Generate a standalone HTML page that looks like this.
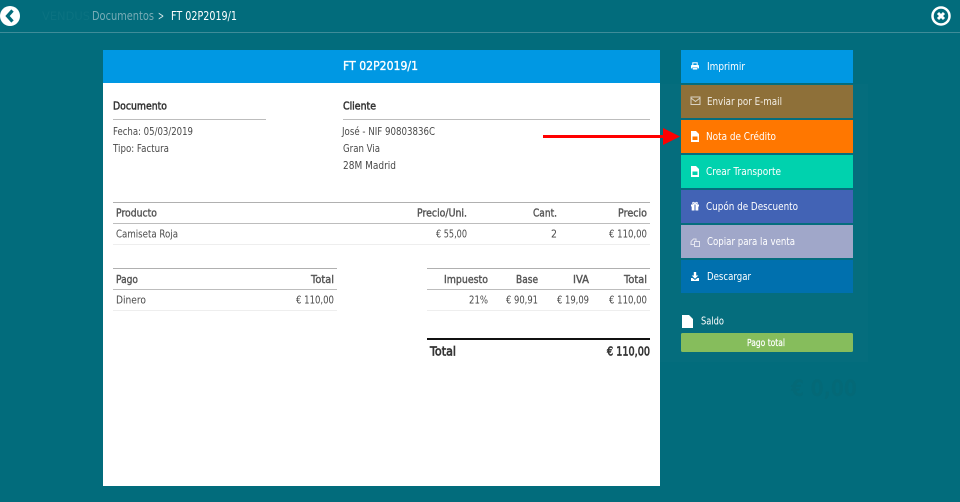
<!DOCTYPE html>
<html lang="es">
<head>
<meta charset="utf-8">
<title>FT 02P2019/1</title>
<style>
html,body{margin:0;padding:0;width:960px;height:502px;overflow:hidden;background:#026c7c}
svg{display:block;position:absolute;left:0;top:0;filter:blur(.3px)}
text{font-family:"DejaVu Sans","Liberation Sans",sans-serif;font-size:10.800px}
.d{fill:#4a4a4a}
.b{fill:#333;stroke:#333;stroke-width:.5px}
.h{fill:#555;stroke:#555;stroke-width:.4px}
.w{fill:#fff}
</style>
</head>
<body>
<svg width="960" height="502" viewBox="0 0 960 502" xmlns="http://www.w3.org/2000/svg">
<rect width="960" height="502" fill="#026c7c"/>
<rect x="660" y="84" width="208" height="278" fill="#056d7d"/>

<!-- top bar -->
<rect x="0" y="32" width="960" height="1" fill="#3f8c99"/>
<text x="42" y="20" textLength="48" lengthAdjust="spacingAndGlyphs" style="font-size:11.500px" fill="#0b7281">VENDUS</text>
<circle cx="10" cy="16" r="10" fill="#fff"/>
<path d="M12.500 10.500L7.500 16L12.500 21.500" fill="none" stroke="#026c7c" stroke-width="3.200"/>
<text x="92" y="20" textLength="62" lengthAdjust="spacingAndGlyphs" style="font-size:12px" fill="#78acb6">Documentos</text>
<text x="158" y="20" textLength="6" lengthAdjust="spacingAndGlyphs" style="font-size:12px" fill="#d5e5e8">&gt;</text>
<text x="171" y="20" textLength="66" lengthAdjust="spacingAndGlyphs" style="font-size:12px" class="w">FT 02P2019/1</text>
<circle cx="941" cy="16" r="8.500" fill="none" stroke="#fff" stroke-width="2.500"/>
<path d="M938 13L944 19M944 13L938 19" stroke="#fff" stroke-width="3"/>

<!-- card -->
<rect x="103" y="50" width="557" height="436" fill="#fff"/>
<rect x="103" y="50" width="557" height="33" fill="#0098e3"/>
<text x="343" y="70" textLength="75" lengthAdjust="spacingAndGlyphs" style="font-size:12.500px;stroke:#fff;stroke-width:.35px" class="w">FT 02P2019/1</text>

<text x="113" y="109.500" textLength="54" lengthAdjust="spacingAndGlyphs" class="b">Documento</text>
<rect x="113" y="119" width="153" height="1" fill="#bdbdbd"/>
<text x="113" y="135" textLength="80" lengthAdjust="spacingAndGlyphs" class="d">Fecha: 05/03/2019</text>
<text x="113" y="152" textLength="56" lengthAdjust="spacingAndGlyphs" class="d">Tipo: Factura</text>

<text x="343" y="109.500" textLength="33" lengthAdjust="spacingAndGlyphs" class="b">Cliente</text>
<rect x="343" y="119" width="307" height="1" fill="#bdbdbd"/>
<text x="342" y="135" textLength="93" lengthAdjust="spacingAndGlyphs" class="d">José - NIF 90803836C</text>
<text x="343" y="152" textLength="37" lengthAdjust="spacingAndGlyphs" class="d">Gran Via</text>
<text x="343" y="169" textLength="53" lengthAdjust="spacingAndGlyphs" class="d">28M Madrid</text>

<!-- product table -->
<rect x="113" y="202" width="537" height="1" fill="#b0b0b0"/>
<rect x="113" y="223" width="537" height="1" fill="#bdbdbd"/>
<rect x="113" y="244" width="537" height="1" fill="#eeeeee"/>
<text x="116" y="216.500" textLength="41" lengthAdjust="spacingAndGlyphs" class="h">Producto</text>
<text x="417" y="216.500" textLength="50" lengthAdjust="spacingAndGlyphs" class="h">Precio/Uni.</text>
<text x="533" y="216.500" textLength="24" lengthAdjust="spacingAndGlyphs" class="h">Cant.</text>
<text x="618" y="216.500" textLength="29" lengthAdjust="spacingAndGlyphs" class="h">Precio</text>
<text x="116" y="237.500" textLength="62" lengthAdjust="spacingAndGlyphs" class="d">Camiseta Roja</text>
<text x="436" y="237.500" textLength="31" lengthAdjust="spacingAndGlyphs" class="d">€ 55,00</text>
<text x="551" y="237.500" textLength="6" lengthAdjust="spacingAndGlyphs" class="d">2</text>
<text x="609" y="237.500" textLength="38" lengthAdjust="spacingAndGlyphs" class="d">€ 110,00</text>

<!-- payment table -->
<rect x="113" y="268" width="224" height="1" fill="#b0b0b0"/>
<rect x="113" y="289" width="224" height="1" fill="#bdbdbd"/>
<rect x="113" y="310" width="224" height="1" fill="#eeeeee"/>
<text x="116" y="283" textLength="22" lengthAdjust="spacingAndGlyphs" class="h">Pago</text>
<text x="311" y="283" textLength="23" lengthAdjust="spacingAndGlyphs" class="h">Total</text>
<text x="116" y="303.500" textLength="30" lengthAdjust="spacingAndGlyphs" class="d">Dinero</text>
<text x="296" y="303.500" textLength="38" lengthAdjust="spacingAndGlyphs" class="d">€ 110,00</text>

<!-- tax table -->
<rect x="427" y="268" width="223" height="1" fill="#b0b0b0"/>
<rect x="427" y="289" width="223" height="1" fill="#bdbdbd"/>
<rect x="427" y="310" width="223" height="1" fill="#eeeeee"/>
<text x="444" y="283" textLength="44" lengthAdjust="spacingAndGlyphs" class="h">Impuesto</text>
<text x="516" y="283" textLength="22" lengthAdjust="spacingAndGlyphs" class="h">Base</text>
<text x="573" y="283" textLength="16" lengthAdjust="spacingAndGlyphs" class="h">IVA</text>
<text x="624" y="283" textLength="23" lengthAdjust="spacingAndGlyphs" class="h">Total</text>
<text x="469" y="303.500" textLength="19" lengthAdjust="spacingAndGlyphs" class="d">21%</text>
<text x="506" y="303.500" textLength="32" lengthAdjust="spacingAndGlyphs" class="d">€ 90,91</text>
<text x="557" y="303.500" textLength="32" lengthAdjust="spacingAndGlyphs" class="d">€ 19,09</text>
<text x="609" y="303.500" textLength="38" lengthAdjust="spacingAndGlyphs" class="d">€ 110,00</text>

<rect x="427" y="338" width="223" height="2" fill="#111"/>
<text x="430" y="355.500" textLength="26" lengthAdjust="spacingAndGlyphs" style="font-size:12px;stroke-width:.65px" class="b">Total</text>
<text x="607" y="355.500" textLength="43" lengthAdjust="spacingAndGlyphs" style="font-size:12px;stroke-width:.65px" class="b">€ 110,00</text>

<!-- buttons -->
<rect x="681" y="50" width="172" height="33" fill="#0098e3"/>
<rect x="681" y="85" width="172" height="33" fill="#8e7039"/>
<rect x="681" y="120" width="172" height="33" fill="#ff7700"/>
<rect x="681" y="155" width="172" height="33" fill="#00d2ae"/>
<rect x="681" y="190" width="172" height="33" fill="#4263b5"/>
<rect x="681" y="225" width="172" height="33" fill="#a0a7c9"/>
<rect x="681" y="260" width="172" height="33" fill="#0070ae"/>

<text x="707" y="70" textLength="38" lengthAdjust="spacingAndGlyphs" class="w">Imprimir</text>
<text x="707" y="105" textLength="75" lengthAdjust="spacingAndGlyphs" fill="#f3eee4">Enviar por E-mail</text>
<text x="706" y="140" textLength="70" lengthAdjust="spacingAndGlyphs" class="w">Nota de Crédito</text>
<text x="706" y="175" textLength="75" lengthAdjust="spacingAndGlyphs" class="w">Crear Transporte</text>
<text x="706" y="210" textLength="92" lengthAdjust="spacingAndGlyphs" class="w">Cupón de Descuento</text>
<text x="707" y="245" textLength="88" lengthAdjust="spacingAndGlyphs" class="w">Copiar para la venta</text>
<text x="707" y="280" textLength="44" lengthAdjust="spacingAndGlyphs" class="w">Descargar</text>

<!-- button icons -->
<rect x="692.800" y="62.800" width="4.400" height="3" fill="none" stroke="#fff" stroke-width="1"/>
<rect x="691" y="65" width="8" height="3.500" rx=".8" fill="#fff"/>
<rect x="692.500" y="67.800" width="5" height="2" fill="#fff" stroke="#0098e3" stroke-width=".5"/>
<g fill="none" stroke="#d9d2c2" stroke-width="1"><rect x="691" y="97" width="9" height="7.500"/><path d="M691 98L695.500 101.500L700 98"/></g>
<path d="M691 131H696L699 134V142H691ZM692.500 136.500V140H697.500V136.500Z" fill="#fff" fill-rule="evenodd"/>
<path d="M691 166H696L699 169V177H691ZM692.500 171.500V175H697.500V171.500Z" fill="#fff" fill-rule="evenodd"/>
<path d="M691 204.500H699V206.500H698.300V210.500H695.500V204.500H694.500V210.500H691.700V206.500H691Z" fill="#fff"/>
<path d="M693 204C691.800 202.200 694 201.500 695 203.800C696 201.500 698.200 202.200 697 204Z" fill="none" stroke="#fff" stroke-width=".9"/>
<g fill="none" stroke="#e4e6f0" stroke-width="1"><path d="M691 241.500L693.500 239H696V241M691 241.500V244.500H694"/><path d="M694.500 241.500H699.500V246.500H694.500Z"/></g>
<path d="M693.800 272H696.200V275.500H698.300L695 278.800L691.700 275.500H693.800ZM691 278H692.500L695 280L697.500 278H699V281H691Z" fill="#fff"/>

<!-- saldo -->
<path d="M682 315H689L693 319V328H682Z" fill="#fff"/>
<text x="701" y="324.500" textLength="23" lengthAdjust="spacingAndGlyphs" class="w">Saldo</text>
<rect x="681" y="333" width="172" height="19" rx="1.500" fill="#86bd5c"/>
<text x="747" y="346" textLength="38" lengthAdjust="spacingAndGlyphs" style="font-size:10px;stroke:#fff;stroke-width:.2px" class="w">Pago total</text>

<!-- faint total behind overlay -->
<text x="791" y="396" textLength="66" lengthAdjust="spacingAndGlyphs" style="font-size:22px;font-weight:bold" fill="#046977">€ 0,00</text>

<!-- arrow -->
<rect x="543" y="135" width="122" height="3" fill="#ff0000"/>
<path d="M663 128L680 136.500L663 145Z" fill="#ff0000"/>
</svg>
</body>
</html>
